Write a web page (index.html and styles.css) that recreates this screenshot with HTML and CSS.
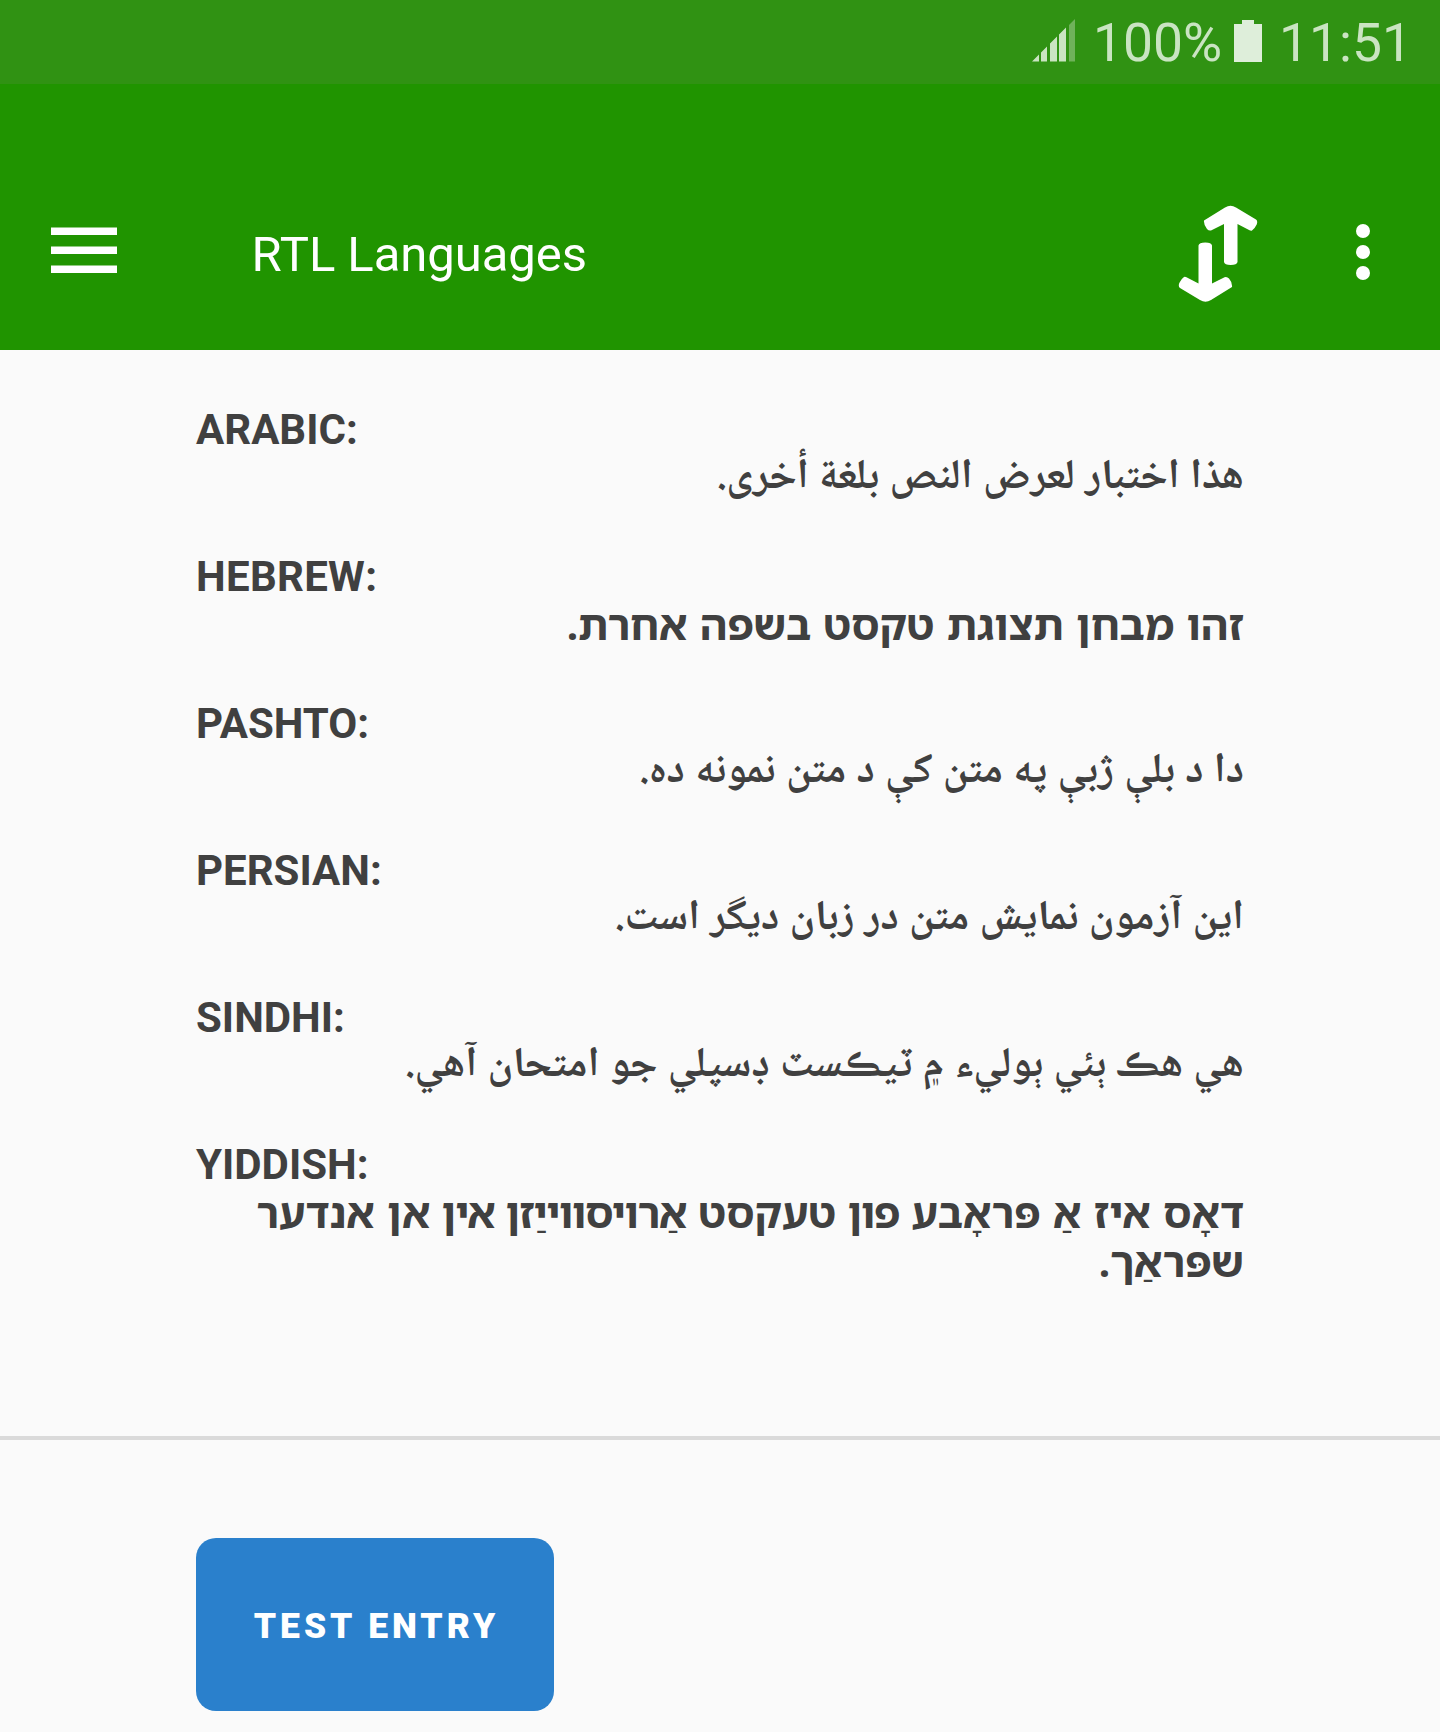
FILE: index.html
```html
<!DOCTYPE html>
<html lang="en">
<head>
<meta charset="utf-8">
<title>RTL Languages</title>
<link rel="stylesheet" href="styles.css">
</head>
<body>
<div class="status">
  <svg class="signal" width="43" height="43" viewBox="0 0 43 43"><path d="M0 42.500 7 35.500V42.500zM9 33.500 15 27.500V42.500H9zM18 24.500 25 17.500V42.500H18zM27 15.500 34 8.500V42.500H27z"/><path class="faint" d="M37 6 43 0V42.500H37z"/></svg>
  <span class="percent">100%</span>
  <svg class="battery" width="28" height="42" viewBox="0 0 28 42"><path d="M8 0H20V4H28V42H0V4H8z"/></svg>
  <span class="clock">11:51</span>
</div>
<header class="toolbar">
  <svg class="menu" width="66" height="48" viewBox="0 0 66 48"><path d="M0 .5H66V8H0zM0 19.500H66V27H0zM0 38.500H66V46H0z"/></svg>
  <h1 class="title">RTL Languages</h1>
  <svg class="swap" width="80" height="98" viewBox="0 0 80 98"><path id="arrow" d="M46 57V19L33.500 25.300Q31 26.200 29 24Q25.500 20 26 15.500L47 2.500Q52.500-.8 58 2.500L78 14.500Q80 16 78.700 19.500Q76.500 24 74 25.500Q73 26 71.500 25.300L59.500 19V57Q59 60 52.700 60Q46.500 60 46 57z"/><use href="#arrow" transform="rotate(180 40 48.750)"/></svg>
  <svg class="more" width="14" height="56" viewBox="0 0 14 56"><circle cx="7" cy="7" r="7"/><circle cx="7" cy="28" r="7"/><circle cx="7" cy="49" r="7"/></svg>
</header>
<main class="samples">
  <section class="sample"><h2>ARABIC:</h2><p class="arab" dir="rtl">هذا اختبار لعرض النص بلغة أخرى.</p></section>
  <section class="sample"><h2 class="wide">HEBREW:</h2><p class="hebr" dir="rtl">זהו מבחן תצוגת טקסט בשפה אחרת.</p></section>
  <section class="sample"><h2>PASHTO:</h2><p class="arab" dir="rtl">دا د بلې ژبې په متن کې د متن نمونه ده.</p></section>
  <section class="sample"><h2>PERSIAN:</h2><p class="arab" dir="rtl">این آزمون نمایش متن در زبان دیگر است.</p></section>
  <section class="sample"><h2>SINDHI:</h2><p class="arab" dir="rtl">هي هڪ ٻئي ٻوليء ۾ ٽيڪسٽ ڊسپلي جو امتحان آهي.</p></section>
  <section class="sample"><h2>YIDDISH:</h2><p class="hebr" dir="rtl">דאָס איז אַ פּראָבע <span class="tight">פון </span>טעקסט <span class="tight">אַרויסווייַזן אין </span>אן אנדער<br>שפּראַך.</p></section>
</main>
<footer class="actions"><button class="entry">TEST ENTRY</button></footer>
</body>
</html>
```
FILE: styles.css
```css
* { box-sizing: border-box; }
body { margin: 0; height: 1732px; overflow: hidden; background: #fafafa; color: #404040; font-family: Roboto, sans-serif; display: flex; flex-direction: column; }
h1, h2, p { margin: 0; }
svg { display: block; flex: none; }

.status { height: 84px; flex: none; display: flex; align-items: flex-start; justify-content: flex-end; padding-right: 28px; background: #309213; color: #cae4c2; font-size: 53.4px; line-height: 62px; }
.status span { margin-top: 12px; white-space: nowrap; }
.signal { margin: 19px 18px 0 0; fill: #cae4c2; }
.faint { fill: #6fb25a; }
.battery { margin: 20px 17px 0 12px; fill: #deeeda; }

.toolbar { height: 266px; flex: none; display: flex; align-items: flex-start; background: #209400; color: #fff; fill: #fff; }
.menu { margin: 143px 0 0 51px; }
.title { margin: 142px auto 0 134.5px; font-size: 49px; font-weight: 400; line-height: 58px; letter-spacing: -.05px; white-space: nowrap; }
.swap { margin: 121px 98px 0 0; }
.more { margin: 140px 70px 0 0; }

.samples { height: 1086px; flex: none; padding: 55px 196px 0; }
.sample { margin-bottom: 49px; font-size: 42px; line-height: 49px; font-weight: 700; }
.sample h2 { font-size: 42px; line-height: 49px; font-weight: 700; }
.sample .wide { letter-spacing: .3px; }
.sample p { white-space: nowrap; word-spacing: 1px; }
.arab { height: 49px; line-height: 50px; font-family: "Noto Naskh Arabic", "DejaVu Sans", sans-serif; }
.hebr { margin-top: -2px; font-family: "Noto Sans Hebrew", "Open Sans", sans-serif; }
.sample:has(.hebr) { margin-bottom: 51px; }
.tight { letter-spacing: -1.2px; }

.actions { flex: 1; border-top: 4px solid #dadada; padding: 98px 196px 0; }
.entry { display: block; width: 358px; height: 173px; border: 0; border-radius: 20px; background: #2a80cc; color: #fff; font: 900 35.500px/42px Roboto, sans-serif; letter-spacing: 3.950px; padding: 3px 0 0 3px; }
```
